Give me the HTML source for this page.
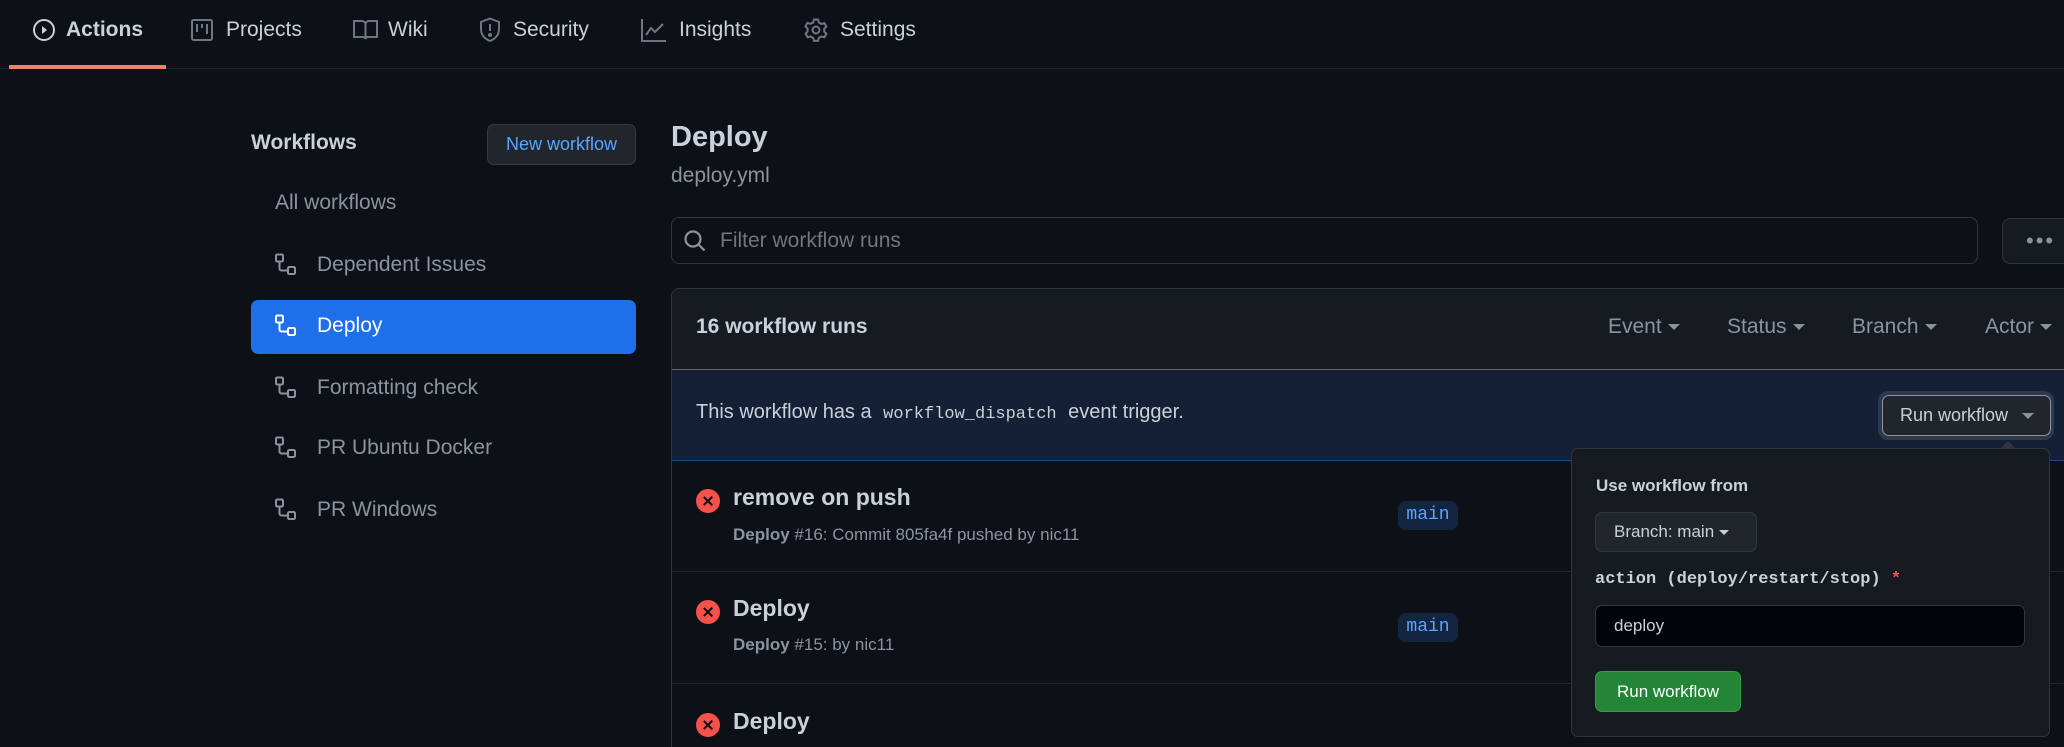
<!DOCTYPE html>
<html style="width:2064px;height:747px;overflow:hidden"><head><meta charset="utf-8"><style>
*{box-sizing:border-box;margin:0;padding:0}
body{width:2064px;height:747px;overflow:hidden;background:#0d1117;font-family:"Liberation Sans",sans-serif;color:#c9d1d9;position:relative}
.a{position:absolute;white-space:nowrap}
.nav{font-size:21px;color:#c9d1d9;top:18px}
svg{display:block}
.ic{position:absolute}
.side{font-size:21px;color:#8b949e}
.car{display:inline-block;width:0;height:0;border-left:6px solid transparent;border-right:6px solid transparent;border-top:6px solid #8b949e;vertical-align:middle;margin-left:6px}
.x{position:absolute;width:24px;height:24px;border-radius:50%;background:#f85149}
.x:before,.x:after{content:"";position:absolute;left:11px;top:6px;width:2.4px;height:12px;background:#0d1117;transform:rotate(45deg)}
.x:after{transform:rotate(-45deg)}
.tag{position:absolute;background:#132540;color:#58a6ff;font-family:"Liberation Mono",monospace;font-size:18px;border-radius:8px;width:60px;height:29px;line-height:29px;text-align:center}
</style></head><body>
<!-- nav -->
<div class="a" style="left:0;top:68px;width:2064px;height:1px;background:#21262d"></div>
<div class="a" style="left:9px;top:65px;width:157px;height:4px;background:#f78166"></div>
<svg class="ic" style="left:32px;top:18px" width="24" height="24" viewBox="0 0 24 24" fill="none" stroke="#c9d1d9" stroke-width="2"><circle cx="12" cy="12" r="10"/><path d="M10 8l5 4-5 4z" fill="#c9d1d9" stroke="none"/></svg>
<div class="a nav" style="left:66px;font-weight:bold">Actions</div>
<svg class="ic" style="left:190px;top:18px" width="24" height="24" viewBox="0 0 24 24" fill="none" stroke="#6e7681" stroke-width="2"><rect x="2" y="2" width="20" height="20" rx="1.5"/><path d="M7 6v8M12 6v4M17 6v10"/></svg>
<div class="a nav" style="left:226px">Projects</div>
<svg class="ic" style="left:353px;top:19px" width="25" height="22" viewBox="0 0 25 22" fill="none" stroke="#6e7681" stroke-width="2"><path d="M1 2h8a3.5 3.5 0 013.5 3.5V20a2.5 2.5 0 00-2.5-2H1zM24 2h-8a3.5 3.5 0 00-3.5 3.5V20a2.5 2.5 0 012.5-2H24z"/></svg>
<div class="a nav" style="left:388px">Wiki</div>
<svg class="ic" style="left:479px;top:17px" width="22" height="26" viewBox="0 0 22 26" fill="none" stroke="#6e7681" stroke-width="2"><path d="M11 1.5l9 3.5v7c0 6-4 10-9 12-5-2-9-6-9-12V5z"/><path d="M11 7v7" /><circle cx="11" cy="18" r="1" fill="#6e7681"/></svg>
<div class="a nav" style="left:513px">Security</div>
<svg class="ic" style="left:641px;top:18px" width="26" height="24" viewBox="0 0 26 24" fill="none" stroke="#6e7681" stroke-width="2"><path d="M1 1v22h24M5 17l5-7 4 4 8-8"/></svg>
<div class="a nav" style="left:679px">Insights</div>
<svg class="ic" style="left:804px;top:18px" width="24" height="24" viewBox="0 0 24 24" fill="none" stroke="#6e7681" stroke-width="2"><circle cx="12" cy="12" r="3.5"/><path d="M10 1.5h4l.8 3 2.6 1.5 3-.9 2 3.5-2.2 2.1v3l2.2 2.1-2 3.5-3-.9-2.6 1.5-.8 3h-4l-.8-3-2.6-1.5-3 .9-2-3.5L3.6 13.5v-3L1.4 8.4l2-3.5 3 .9L9.2 4.5z"/></svg>
<div class="a nav" style="left:840px">Settings</div>

<!-- sidebar -->
<div class="a" style="left:251px;top:131px;font-size:21px;font-weight:bold;color:#c9d1d9">Workflows</div>
<div class="a" style="left:487px;top:124px;width:149px;height:41px;border:1px solid #363b42;border-radius:7px;background:#21262d;color:#58a6ff;font-size:18px;text-align:center;line-height:39px">New workflow</div>
<div class="a side" style="left:275px;top:191px">All workflows</div>
<div class="a" style="left:251px;top:300px;width:385px;height:54px;background:#1f6feb;border-radius:7px"></div>
<div class="a side" style="left:317px;top:253px">Dependent Issues</div>
<div class="a side" style="left:317px;top:314px;color:#fff">Deploy</div>
<div class="a side" style="left:317px;top:376px">Formatting check</div>
<div class="a side" style="left:317px;top:436px">PR Ubuntu Docker</div>
<div class="a side" style="left:317px;top:498px">PR Windows</div>
<svg width="0" height="0" style="position:absolute"><defs><g id="wf" fill="none" stroke-width="2"><rect x="2" y="1.5" width="7" height="7" rx="1.3"/><rect x="14" y="14" width="7" height="7" rx="1.3"/><path d="M5.5 8.5v7a2 2 0 002 2H14"/></g></defs></svg>
<svg class="ic" style="left:274px;top:253px" width="24" height="24" stroke="#8b949e"><use href="#wf"/></svg>
<svg class="ic" style="left:274px;top:314px" width="24" height="24" stroke="#fff"><use href="#wf"/></svg>
<svg class="ic" style="left:274px;top:376px" width="24" height="24" stroke="#8b949e"><use href="#wf"/></svg>
<svg class="ic" style="left:274px;top:436px" width="24" height="24" stroke="#8b949e"><use href="#wf"/></svg>
<svg class="ic" style="left:274px;top:498px" width="24" height="24" stroke="#8b949e"><use href="#wf"/></svg>

<!-- main -->
<div class="a" style="left:671px;top:121px;font-size:29px;font-weight:bold;color:#c9d1d9">Deploy</div>
<div class="a" style="left:671px;top:164px;font-size:21px;color:#8b949e">deploy.yml</div>
<div class="a" style="left:671px;top:217px;width:1307px;height:47px;border:1px solid #30363d;border-radius:8px;background:#0d1117"></div>
<svg class="ic" style="left:683px;top:229px" width="24" height="24" viewBox="0 0 24 24" fill="none" stroke="#8b949e" stroke-width="2.2"><circle cx="10" cy="10" r="7.5"/><path d="M15.5 15.5l6 6"/></svg>
<div class="a" style="left:720px;top:229px;font-size:21px;color:#6e7681">Filter workflow runs</div>
<div class="a" style="left:2002px;top:218px;width:62px;height:46px;border:1px solid #30363d;border-right:none;border-radius:8px 0 0 8px;background:#161b22"></div>
<div class="a" style="left:2026px;top:236px;color:#8b949e;font-size:22px;letter-spacing:2px;line-height:10px">•••</div>

<div class="a" style="left:671px;top:288px;width:1393px;height:459px;border:1px solid #30363d;border-right:none;border-bottom:none;border-radius:8px 0 0 0;overflow:hidden">
 <div style="height:81px;background:#161b22;border-bottom:1px solid #1f6feb"></div>
 <div style="height:91px;background:#132036;border-bottom:1px solid #1f4a80"></div>
 <div style="height:111px;border-bottom:1px solid #21262d"></div>
 <div style="height:112px;border-bottom:1px solid #21262d"></div>
</div>
<div class="a" style="left:696px;top:315px;font-size:21px;font-weight:bold;color:#c9d1d9">16 workflow runs</div>
<div class="a" style="left:1608px;top:315px;font-size:21px;color:#8b949e">Event<span class="car"></span></div>
<div class="a" style="left:1727px;top:315px;font-size:21px;color:#8b949e">Status<span class="car"></span></div>
<div class="a" style="left:1852px;top:315px;font-size:21px;color:#8b949e">Branch<span class="car"></span></div>
<div class="a" style="left:1985px;top:315px;font-size:21px;color:#8b949e">Actor<span class="car"></span></div>

<div class="a" style="left:696px;top:401px;font-size:20px;color:#c9d1d9">This workflow has a <span style="font-family:'Liberation Mono',monospace;font-size:17px;padding:0 6px">workflow_dispatch</span> event trigger.</div>
<div class="a" style="left:1878px;top:391px;width:176px;height:49px;border-radius:10px;background:#2d3a4c"></div>
<div class="a" style="left:1882px;top:395px;width:169px;height:41px;border:1px solid #8b949e;border-radius:7px;background:#21262d;color:#c9d1d9;font-size:18px;line-height:39px;padding-left:17px">Run workflow<span class="car" style="margin-left:14px"></span></div>

<div class="x" style="left:696px;top:489px"></div>
<div class="a" style="left:733px;top:484px;font-size:23px;font-weight:bold;color:#c9d1d9">remove on push</div>
<div class="a" style="left:733px;top:525px;font-size:17px;color:#8b949e"><b>Deploy</b> #16: Commit 805fa4f pushed by nic11</div>
<div class="tag" style="left:1398px;top:501px">main</div>
<div class="x" style="left:696px;top:600px"></div>
<div class="a" style="left:733px;top:595px;font-size:23px;font-weight:bold;color:#c9d1d9">Deploy</div>
<div class="a" style="left:733px;top:635px;font-size:17px;color:#8b949e"><b>Deploy</b> #15: by nic11</div>
<div class="tag" style="left:1398px;top:613px">main</div>
<div class="x" style="left:696px;top:713px"></div>
<div class="a" style="left:733px;top:708px;font-size:23px;font-weight:bold;color:#c9d1d9">Deploy</div>

<!-- popup -->
<div class="a" style="left:1571px;top:448px;width:479px;height:289px;background:#161b22;border:1px solid #30363d;border-radius:7px"></div>
<div class="a" style="left:2000px;top:441px;width:0;height:0;border-left:8px solid transparent;border-right:8px solid transparent;border-bottom:8px solid #30363d"></div>
<div class="a" style="left:1596px;top:476px;font-size:17px;font-weight:bold;color:#c9d1d9">Use workflow from</div>
<div class="a" style="left:1595px;top:512px;width:162px;height:40px;border:1px solid #30363d;border-radius:7px;background:#21262d;color:#c9d1d9;font-size:17px;line-height:38px;padding-left:18px">Branch: main<span class="car" style="border-top-color:#c9d1d9;border-width:5px 5px 0;margin-left:5px"></span></div>
<div class="a" style="left:1595px;top:570px;font-size:17px;font-weight:bold;font-family:'Liberation Mono',monospace;color:#c9d1d9">action (deploy/restart/stop) <span style="color:#f85149">*</span></div>
<div class="a" style="left:1595px;top:605px;width:430px;height:42px;border:1px solid #30363d;border-radius:7px;background:#010409;color:#c9d1d9;font-size:17px;line-height:40px;padding-left:18px">deploy</div>
<div class="a" style="left:1595px;top:671px;width:146px;height:41px;border:1px solid #2ea043;border-radius:7px;background:#238636;color:#fff;font-size:17px;line-height:39px;text-align:center">Run workflow</div>
</body></html>
